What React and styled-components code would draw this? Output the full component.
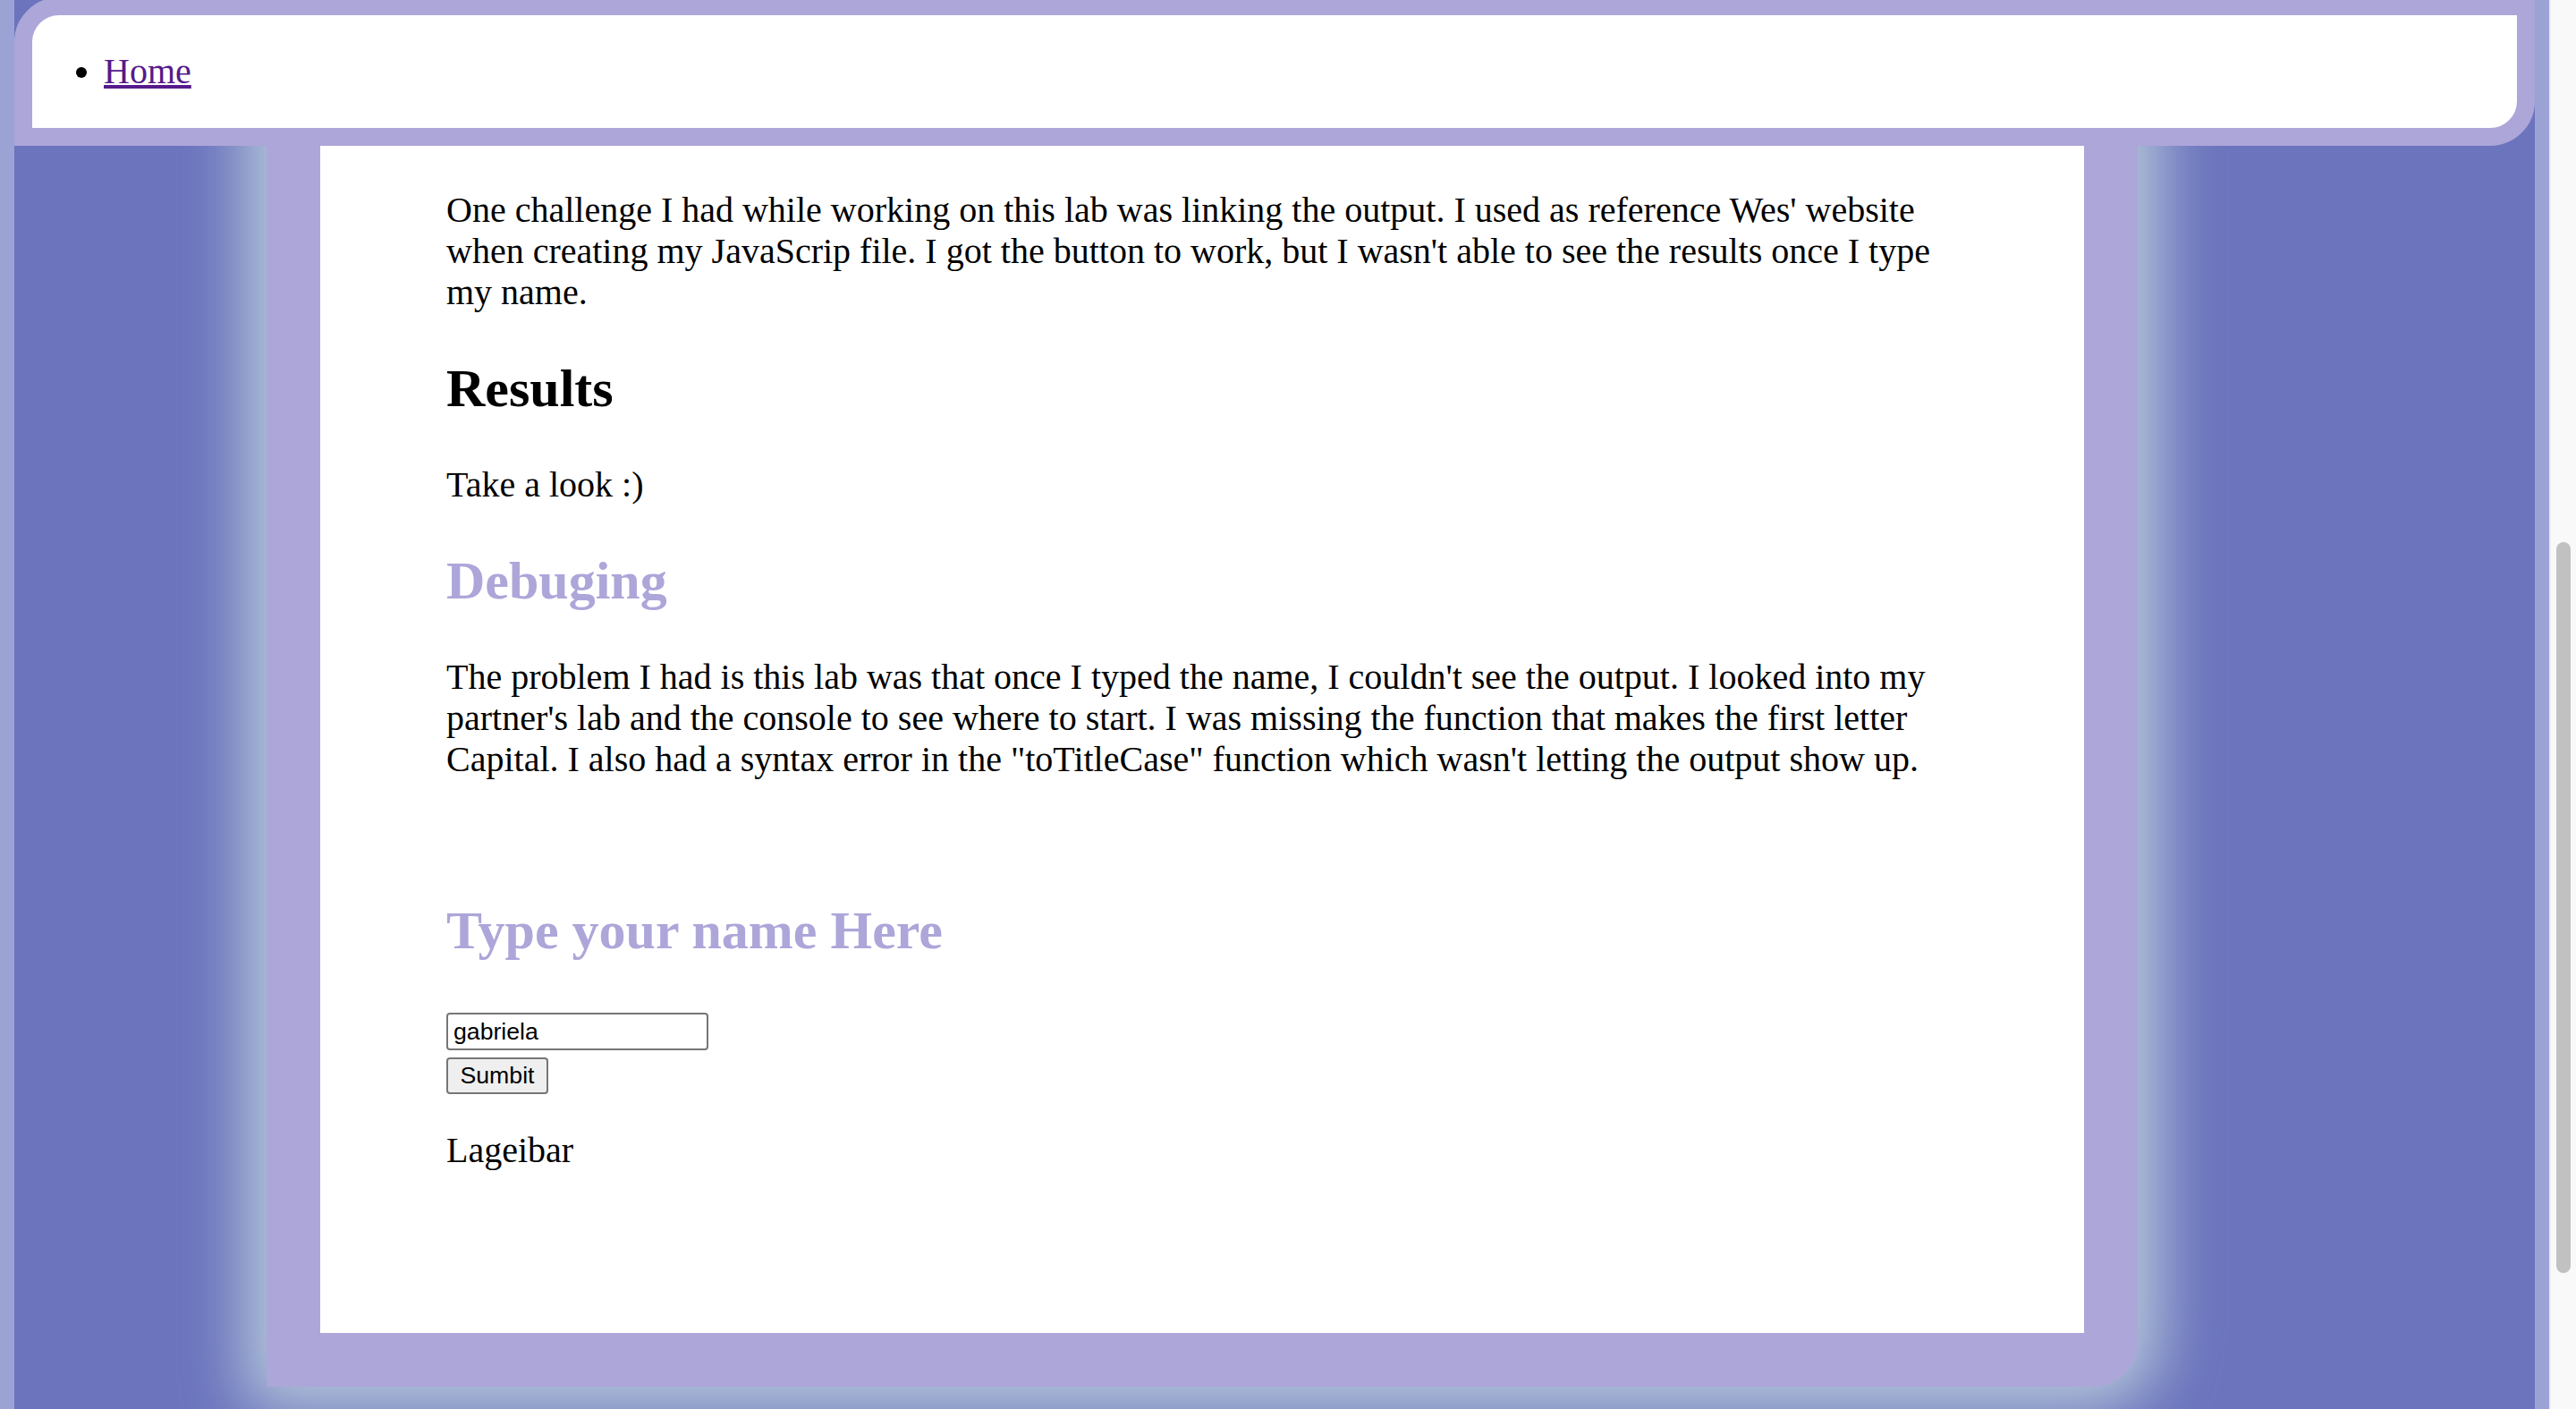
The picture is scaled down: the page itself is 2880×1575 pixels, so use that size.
import React from 'react';
import styled, { createGlobalStyle } from 'styled-components';

const GlobalStyle = createGlobalStyle`
  html, body {
    margin: 0;
    padding: 0;
    overflow: hidden;
  }
  body {
    font-family: "Liberation Serif", "Times New Roman", serif;
    color: #000;
  }
`;

export default function App() {
  return (
    <>
      <GlobalStyle />
      <Window>
        <Viewport>
          <Page>
            <Nav>
              <NavList>
                <li>
                  <NavLink href='#'>Home</NavLink>
                </li>
              </NavList>
            </Nav>
            <Card>
              <Article>
                <Text>
                  One challenge I had while working on this lab was linking the
                  output. I used as reference Wes' website when creating my
                  JavaScrip file. I got the button to work, but I wasn't able to
                  see the results once I type my name.
                </Text>
                <Heading>Results</Heading>
                <Text>Take a look :)</Text>
                <Heading $accent>Debuging</Heading>
                <Text>
                  The problem I had is this lab was that once I typed the name, I
                  couldn't see the output. I looked into my partner's lab and the
                  console to see where to start. I was missing the function that
                  makes the first letter Capital. I also had a syntax error in the
                  "toTitleCase" function which wasn't letting the output show up.
                </Text>
                <Heading $accent $spaced>
                  Type your name Here
                </Heading>
                <Form onSubmit={(e) => e.preventDefault()}>
                  <NameInput type='text' defaultValue='gabriela' />
                  <SubmitButton type='submit'>Sumbit</SubmitButton>
                </Form>
                <Text>Lageibar</Text>
              </Article>
            </Card>
          </Page>
        </Viewport>
        <Scrollbar>
          <Thumb />
        </Scrollbar>
      </Window>
    </>
  );
}

const Window = styled.div`
  display: flex;
  height: 1575px;
  overflow: hidden;
`;

const Viewport = styled.div`
  flex: 1;
  background: #9aa3d3;
  padding: 0 16px;
  overflow: hidden;
`;

const Page = styled.div`
  height: 100%;
  background: #6b74bd;
`;

const Nav = styled.nav`
  position: fixed;
  top: -3px;
  left: 16px;
  width: 2818px;
  box-sizing: border-box;
  z-index: 2;
  background: #fff;
  border: 20px solid #ada6d9;
  border-radius: 50px 0 50px 0;
`;

const NavList = styled.ul`
  margin: 40px 0;
  padding-left: 80px;
  list-style: disc;
  font-size: 40px;
  line-height: 46px;
`;

const NavLink = styled.a`
  color: #551a8b;
  text-decoration: underline;
`;

const Card = styled.div`
  margin-left: 282px;
  width: 2092px;
  box-sizing: border-box;
  background: #ada6d9;
  padding: 0 60px 60px;
  border-bottom-right-radius: 50px;
  box-shadow: 0 0 70px 24px #b8cadb;
`;

const Article = styled.div`
  background: #fff;
  padding: 172px 141px 141px;
`;

const Text = styled.p`
  margin: 40px 0;
  font-size: 40px;
  line-height: 46px;
`;

const Heading = styled.h2`
  margin: ${(p) => (p.$spaced ? '134px' : '50px')} 0 50px;
  font-size: 60px;
  line-height: 69px;
  font-weight: bold;
  color: ${(p) => (p.$accent ? '#ada6d9' : '#000')};
`;

const Form = styled.form`
  display: flex;
  flex-direction: column;
  align-items: flex-start;
  gap: 8px;
  padding-top: 7px;
`;

const NameInput = styled.input`
  width: 293px;
  height: 42px;
  box-sizing: border-box;
  padding: 2px 6px;
  border: 2px solid #767676;
  border-radius: 4px;
  font-family: "Liberation Sans", Arial, sans-serif;
  font-size: 26.67px;
  color: #000;
  background: #fff;
`;

const SubmitButton = styled.button`
  width: 114px;
  height: 41px;
  box-sizing: border-box;
  padding: 0;
  border: 2px solid #767676;
  border-radius: 4px;
  background: #efefef;
  font-family: "Liberation Sans", Arial, sans-serif;
  font-size: 26.67px;
  color: #000;
`;

const Scrollbar = styled.div`
  width: 30px;
  box-sizing: border-box;
  background: #f9f9f9;
  border-left: 2px solid #ececec;
  padding: 606px 0 0 6px;
`;

const Thumb = styled.div`
  width: 16px;
  height: 817px;
  border-radius: 8px;
  background: #c1c1c1;
`;
